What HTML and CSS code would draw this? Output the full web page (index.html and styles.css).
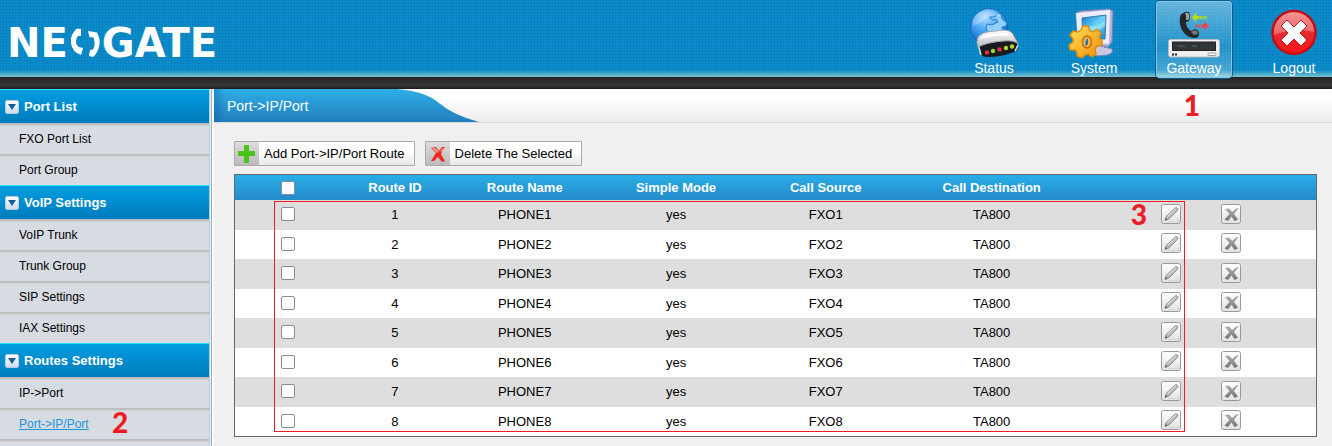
FILE: index.html
```html
<!DOCTYPE html>
<html lang="en">
<head>
<meta charset="utf-8">
<title>NeoGate</title>
<link rel="stylesheet" href="styles.css">
</head>
<body>
<svg class="defs" aria-hidden="true">
  <defs>
    <linearGradient id="pane" x1="0" y1="0" x2="0" y2="1"><stop offset="0" stop-color="#fff"/><stop offset="1" stop-color="#e2e2e2"/></linearGradient>
    <linearGradient id="gray" x1="0" y1="0" x2="0" y2="1"><stop offset="0" stop-color="#b0b0b0"/><stop offset="1" stop-color="#747474"/></linearGradient>
    <symbol id="edit" viewBox="0 0 20 20">
      <rect x=".5" y=".5" width="19" height="19" rx="2" fill="url(#pane)" stroke="#999"/>
      <path d="M7 17h9l2-3v4H7z" fill="#d4d4d4"/>
      <path d="M4 16.500l1-4L14 4q1-1 2.300 0t.4 2.300L8 15z" fill="#b9b9b4" stroke="#8a8a86" stroke-width=".8"/>
      <path d="M6.500 12.500L15 4.700" stroke="#e9e9e4"/>
      <path d="M4 16.500l.8-2.500 1.700 1.500z" fill="#555"/>
    </symbol>
    <symbol id="remove" viewBox="0 0 20 20">
      <rect x=".5" y=".5" width="19" height="19" rx="2" fill="url(#pane)" stroke="#999"/>
      <path d="M4 5l4-.5 3.200 3.500L15 4.500l3-.5q-3 3-5 6l4 5.500-3.500 1.500-3-4.500L7 17l-3.500-1.500 5-5.500z" fill="url(#gray)"/>
    </symbol>
  </defs>
</svg>

<header class="top">
  <div class="logo"><span>NE</span><svg class="logo-phones" viewBox="0 0 32 32" aria-hidden="true">
      <path d="M8 1.500Q1 7 2 16t10 12l2-7-4-1Q7 18 7 14q0-3 2-5l3 0V2z" fill="#fff"/>
      <path d="M19 4l9 1.500Q32 13 30 20t-6 10l-4-1 1-6 3-.5q3-5 .5-12l-4-.5z" fill="#fff"/>
    </svg><span>GATE</span></div>
  <nav class="nav">
    <a class="nav-item" href="#status">
      <svg class="nav-icon" viewBox="0 0 52 50" aria-hidden="true">
        <defs>
          <radialGradient id="globe" cx=".4" cy=".25" r=".8"><stop offset="0" stop-color="#a9ddff"/><stop offset=".5" stop-color="#3c9df0"/><stop offset="1" stop-color="#0c55b4"/></radialGradient>
          <linearGradient id="cap" x1="0" y1="0" x2="0" y2="1"><stop offset="0" stop-color="#fff"/><stop offset="1" stop-color="#b9bcc2"/></linearGradient>
        </defs>
        <circle cx="21" cy="19" r="18.500" fill="url(#globe)" stroke="#1a66b8"/>
        <path d="M22 9l5 0 3-4 3 1 1 5 5 4-1 3-4 1 1 4-5 3-4-2-6 0-2-4 1-4 5 1 6-3-2-3-4 1z" fill="#8fd0fc" stroke="#2881cf"/>
        <path d="M5 12Q9 3 20 3t13 6Q21 5 14 14L5 18z" fill="#fff" opacity=".25"/>
        <path d="M10 33l36-7 4 13q0 4-7 6-10 4-24 4-5 0-6-3z" fill="#171b20"/>
        <path d="M10 36l3 11M50 37l-3 6" stroke="#ddd" stroke-width="1.500"/>
        <path d="M9 34q0-8 10-10l17-2q6 0 9 4l5 10q-4-4-14-3-16 1-26 6z" fill="url(#cap)" stroke="#a0a4aa"/>
        <path d="M12 31q2-4 10-5l14-1q4 0 6 3-12-2-30 3z" fill="#fff"/>
        <circle cx="19" cy="44.500" r="2.200" fill="#e23232"/><circle cx="25" cy="43" r="2.200" fill="#9bd62c"/><circle cx="31.500" cy="41.500" r="2.200" fill="#e23232"/><circle cx="38" cy="40" r="2.200" fill="#b3d62c"/><circle cx="44" cy="38.500" r="2.200" fill="#b3d62c"/>
      </svg>
      <span>Status</span>
    </a>
    <a class="nav-item" href="#system">
      <svg class="nav-icon" viewBox="0 0 52 50" aria-hidden="true">
        <defs>
          <linearGradient id="screen" x1="0" y1="0" x2="1" y2="1"><stop offset="0" stop-color="#0c77cb"/><stop offset=".5" stop-color="#68d3fa"/><stop offset="1" stop-color="#1283d4"/></linearGradient>
          <linearGradient id="gear" x1="0" y1="0" x2="1" y2="1"><stop offset="0" stop-color="#ffe35a"/><stop offset="1" stop-color="#f08c08"/></linearGradient>
        </defs>
        <path d="M20 38l16-3v4l8 2q2 4-5 6-10 2-19-1z" fill="#c9c9e4" stroke="#8587b5"/>
        <path d="M8 5l5-2 28-2 4 2-1 31-4 5-30-4z" fill="#b2b2da" stroke="#8082b4"/>
        <path d="M8 5l34-3-1 34-31-2z" fill="#ececfa"/>
        <path d="M14 10l24-3-1 24-22-1z" fill="url(#screen)" stroke="#347ab4"/>
        <path d="M15 18q12 3 22-6v6q-9 8-22 6z" fill="#9ce8ff" opacity=".7"/>
        <path d="M15 18l5 0 2 5 3 1 4-3 4 4-2 5 3 2 0 5-5 1-2 3 1 5-4 3-4-3-3 1-3 3-5-2 0-4-2-2-5 0-1-5 4-3 0-3-3-4 3-4 5 1 3-2z" fill="url(#gear)" stroke="#e08c08" stroke-width="1.500" stroke-linejoin="round"/>
        <ellipse cx="19" cy="34" rx="4.500" ry="6" fill="#f2b24b" stroke="#c86d06" stroke-width="1.500"/>
        <path d="M18 38q-2-5 2-8v6z" fill="#2374b8"/>
      </svg>
      <span>System</span>
    </a>
    <a class="nav-item active" href="#gateway" aria-current="page">
      <svg class="nav-icon" viewBox="0 0 52 50" aria-hidden="true">
        <path d="M14 6q3-3 7-2 2 4 0 9l-3 1q0 6 5 9l4-2q4 1 4 5 0 4-5 4-8-1-12-8-4-9-1-16z" fill="#25282b"/>
        <path d="M17 5q3-1 4 1 1 4-1 6l-2 0q1-4-1-7z" fill="#9ba1a5"/><path d="M23 24l4-2q3 1 3 4l-4 1z" fill="#777"/>
        <path d="M23.500 9.500l5-4.500v3h3v3h-3v3z" fill="#b7dc12"/><path d="M33 8v3M35.500 8v3M38 8v3" stroke="#b7dc12" stroke-width="1.500"/>
        <path d="M41 18l-5-4.500v3h-3v3h3v3z" fill="#ef4451"/><path d="M31 16.500v3M28.500 16.500v3" stroke="#ef4451" stroke-width="1.500"/>
        <rect x=".5" y="31.500" width="51" height="17.500" rx="2" fill="#efefef" stroke="#bbb"/>
        <rect x="4.500" y="34" width="43" height="8.500" fill="#30353a" stroke="#222"/>
        <path d="M9 38h8M24 38h5" stroke="#454b50" stroke-width="2"/>
        <path d="M4 46.500h2M7 46.500h2" stroke="#222" stroke-width="2"/><rect x="40" y="45" width="8" height="2.500" rx="1" fill="#fff" stroke="#999"/>
      </svg>
      <span>Gateway</span>
    </a>
    <a class="nav-item" href="#logout">
      <svg class="nav-icon" viewBox="0 0 52 50" aria-hidden="true">
        <defs><linearGradient id="stop" x1="0" y1="0" x2="0" y2="1"><stop offset="0" stop-color="#f27070"/><stop offset=".5" stop-color="#e52c30"/><stop offset="1" stop-color="#ff1212"/></linearGradient></defs>
        <circle cx="26" cy="24.500" r="21.500" fill="url(#stop)" stroke="#c40d14" stroke-width="2.500"/>
        <path d="M6 24a20 20 0 0 1 40 0q-18-5-40 3z" fill="#fff" opacity=".28"/>
        <path d="M19 12l7 7 7-7 6 6-7 7 7 7-6 6-7-7-7 7-6-6 7-7-7-7z" fill="#fff" stroke="#bd1a1f"/>
      </svg>
      <span>Logout</span>
    </a>
  </nav>
</header>

<div class="layout">
  <aside class="side">
    <h2 class="group"><span class="fold"></span>Port List</h2>
    <ul class="links"><li><a href="#fxo">FXO Port List</a></li><li><a href="#group">Port Group</a></li></ul>
    <h2 class="group"><span class="fold"></span>VoIP Settings</h2>
    <ul class="links"><li><a href="#voip">VoIP Trunk</a></li><li><a href="#trunk">Trunk Group</a></li><li><a href="#sip">SIP Settings</a></li><li><a href="#iax">IAX Settings</a></li></ul>
    <h2 class="group"><span class="fold"></span>Routes Settings</h2>
    <ul class="links"><li><a href="#ip-port">IP-&gt;Port</a></li><li><a class="current" href="#port-ip">Port-&gt;IP/Port</a><b class="mark mark-link">2</b></li></ul>
    <div class="rest"></div>
  </aside>

  <main class="main">
    <div class="tabs">
      <h1 class="tab">Port-&gt;IP/Port</h1>
      <svg class="tab-end" viewBox="0 0 90 33" preserveAspectRatio="none" aria-hidden="true">
        <defs><linearGradient id="tabfill" x1="0" y1="0" x2="0" y2="1"><stop offset="0" stop-color="#2eaee6"/><stop offset="1" stop-color="#227fbd"/></linearGradient></defs>
        <path d="M0 0H8Q36 2 50 14T90 33H0z" fill="url(#tabfill)"/>
      </svg>
      <b class="mark mark-tab">1</b>
    </div>
    <div class="content">
      <div class="actions">
        <button class="action" type="button"><span class="action-icon"><svg viewBox="0 0 24 23" aria-hidden="true"><path d="M9 3h5v6h6v5h-6v7H9v-7H3V9h6z" fill="#4cc31c"/></svg></span><span class="action-text">Add Port-&gt;IP/Port Route</span></button>
        <button class="action" type="button"><span class="action-icon"><svg viewBox="0 0 24 23" aria-hidden="true"><path d="M5 6l5-1 3 4 3-4h3q-3 4-4 7 2 4 4 7l-3 1-4-5-4 4H5l5-8z" fill="#ed2a20"/><path d="M6 6l4 0 3 4-3 1zM14 9l3-3h2l-3 4z" fill="#f78e84"/></svg></span><span class="action-text">Delete The Selected</span></button>
      </div>
      <div class="grid">
        <table class="routes">
          <colgroup><col class="c-check"><col class="c-id"><col class="c-name"><col class="c-mode"><col class="c-source"><col class="c-dest"><col class="c-edit"><col></colgroup>
          <thead><tr><th><input class="check" type="checkbox" aria-label="Select all routes"></th><th>Route ID</th><th>Route Name</th><th>Simple Mode</th><th>Call Source</th><th>Call Destination</th><th></th><th></th></tr></thead>
          <tbody>
            <tr><td><input class="check" type="checkbox" aria-label="Select route 1"></td><td>1</td><td>PHONE1</td><td>yes</td><td>FXO1</td><td>TA800</td><td class="edit"><button class="tool" type="button" aria-label="Edit route 1"><svg><use href="#edit"/></svg></button></td><td class="remove"><button class="tool" type="button" aria-label="Delete route 1"><svg><use href="#remove"/></svg></button></td></tr>
            <tr><td><input class="check" type="checkbox" aria-label="Select route 2"></td><td>2</td><td>PHONE2</td><td>yes</td><td>FXO2</td><td>TA800</td><td class="edit"><button class="tool" type="button" aria-label="Edit route 2"><svg><use href="#edit"/></svg></button></td><td class="remove"><button class="tool" type="button" aria-label="Delete route 2"><svg><use href="#remove"/></svg></button></td></tr>
            <tr><td><input class="check" type="checkbox" aria-label="Select route 3"></td><td>3</td><td>PHONE3</td><td>yes</td><td>FXO3</td><td>TA800</td><td class="edit"><button class="tool" type="button" aria-label="Edit route 3"><svg><use href="#edit"/></svg></button></td><td class="remove"><button class="tool" type="button" aria-label="Delete route 3"><svg><use href="#remove"/></svg></button></td></tr>
            <tr><td><input class="check" type="checkbox" aria-label="Select route 4"></td><td>4</td><td>PHONE4</td><td>yes</td><td>FXO4</td><td>TA800</td><td class="edit"><button class="tool" type="button" aria-label="Edit route 4"><svg><use href="#edit"/></svg></button></td><td class="remove"><button class="tool" type="button" aria-label="Delete route 4"><svg><use href="#remove"/></svg></button></td></tr>
            <tr><td><input class="check" type="checkbox" aria-label="Select route 5"></td><td>5</td><td>PHONE5</td><td>yes</td><td>FXO5</td><td>TA800</td><td class="edit"><button class="tool" type="button" aria-label="Edit route 5"><svg><use href="#edit"/></svg></button></td><td class="remove"><button class="tool" type="button" aria-label="Delete route 5"><svg><use href="#remove"/></svg></button></td></tr>
            <tr><td><input class="check" type="checkbox" aria-label="Select route 6"></td><td>6</td><td>PHONE6</td><td>yes</td><td>FXO6</td><td>TA800</td><td class="edit"><button class="tool" type="button" aria-label="Edit route 6"><svg><use href="#edit"/></svg></button></td><td class="remove"><button class="tool" type="button" aria-label="Delete route 6"><svg><use href="#remove"/></svg></button></td></tr>
            <tr><td><input class="check" type="checkbox" aria-label="Select route 7"></td><td>7</td><td>PHONE7</td><td>yes</td><td>FXO7</td><td>TA800</td><td class="edit"><button class="tool" type="button" aria-label="Edit route 7"><svg><use href="#edit"/></svg></button></td><td class="remove"><button class="tool" type="button" aria-label="Delete route 7"><svg><use href="#remove"/></svg></button></td></tr>
            <tr><td><input class="check" type="checkbox" aria-label="Select route 8"></td><td>8</td><td>PHONE8</td><td>yes</td><td>FXO8</td><td>TA800</td><td class="edit"><button class="tool" type="button" aria-label="Edit route 8"><svg><use href="#edit"/></svg></button></td><td class="remove"><button class="tool" type="button" aria-label="Delete route 8"><svg><use href="#remove"/></svg></button></td></tr>
          </tbody>
        </table>
        <div class="outline"></div>
        <b class="mark mark-grid">3</b>
      </div>
    </div>
  </main>
</div>
</body>
</html>
```

FILE: styles.css
```css
* { box-sizing: border-box; }

body {
  margin: 0;
  min-height: 100vh;
  display: flex;
  flex-direction: column;
  background: #f0f0f0;
  color: #000;
  font: 13px/16px "Liberation Sans", Arial, sans-serif;
}

a { color: inherit; text-decoration: none; }
.defs { position: absolute; width: 0; height: 0; }

/* Header */
.top {
  display: flex;
  justify-content: space-between;
  padding-bottom: 11px;
  background:
    linear-gradient(#222, #383838 8px, #1c1c1c) bottom / 100% 12px no-repeat,
    linear-gradient(to bottom, transparent 70px, #7cc3cf 77px),
    repeating-linear-gradient(to right, rgba(0, 50, 110, .09) 0 1px, transparent 1px 3px),
    repeating-linear-gradient(to bottom, rgba(0, 50, 110, .08) 0 1px, transparent 1px 3px),
    #0b8dcb;
}
.logo {
  display: flex;
  align-items: center;
  gap: 1px;
  padding: 8px 0 0 7px;
  color: #fff;
  font: bold 40px/40px "DejaVu Sans", sans-serif;
}
.logo-phones { width: 32px; height: 32px; }

.nav { display: flex; gap: 24px; padding-top: 1px; }
.nav-item {
  display: flex;
  flex-direction: column;
  align-items: center;
  width: 76px;
  height: 77px;
  padding-top: 7px;
  color: #fff;
  font-size: 14px;
  line-height: 20px;
}
.nav-item.active {
  border-radius: 4px;
  background: linear-gradient(rgba(255, 255, 255, .38), rgba(255, 255, 255, .1) 60%, rgba(255, 255, 255, .3));
  box-shadow: inset 0 0 0 1px #84c5e2, 0 0 0 1px #075e8d;
}
.nav-icon { width: 52px; height: 50px; }

/* Sidebar */
.layout { flex: 1; display: flex; }
.side {
  display: flex;
  flex-direction: column;
  flex: 0 0 210px;
  border-right: 1px solid #9fd6ee;
}
.group {
  display: flex;
  align-items: center;
  gap: 5px;
  height: 34px;
  margin: 0;
  padding-left: 5px;
  border-top: 1px solid #2ee2f5;
  background: linear-gradient(#009de0, #007bbd);
  color: #fff;
  font-size: 13px;
}
.fold {
  display: flex;
  align-items: center;
  justify-content: center;
  width: 14px;
  height: 14px;
  border: 1px solid #b7cbe8;
  border-radius: 2px;
  background: linear-gradient(#fff, #cddaf0);
}
.fold::before {
  content: "";
  border: 4px solid transparent;
  border-top: 6px solid #1b5c94;
  border-bottom: 0;
}
.links { margin: 0; padding: 0; list-style: none; font-size: 12px; }
.links li {
  position: relative;
  height: 31px;
  padding: 8px 0 0 19px;
}
.links li, .rest { background: linear-gradient(#b8b8b8, #c4c5c8 2px, #d7dbe2 3px); }
.rest { flex: 1; }
.current { color: #2196d8; text-decoration: underline; }

/* Content */
.main {
  flex: 1;
  min-width: 0;
  margin-left: 1px;
  border-left: 1px solid #aaa;
  box-shadow: inset 2px 0 #fafafa;
  padding-left: 2px;
}
.tabs {
  position: relative;
  display: flex;
  height: 34px;
  border-bottom: 1px solid #d8d8d8;
  background: linear-gradient(#fff 30%, #ececec);
}
.tab {
  width: 175px;
  margin: 0;
  padding: 0 13px;
  background: linear-gradient(to right, rgba(0, 70, 140, .3), transparent 12px), linear-gradient(#2eaee6, #227fbd);
  color: #fff;
  font-size: 14px;
  font-weight: normal;
  line-height: 34px;
}
.tab-end { width: 90px; height: 33px; }
.content { padding: 18px 15px 9px 20px; }

.actions { display: flex; gap: 10px; margin-bottom: 8px; }
.action {
  display: flex;
  height: 25px;
  padding: 0;
  border: 1px solid #aaa;
  border-radius: 1px;
  background: linear-gradient(#fff 40%, #e8e8e8);
  color: #000;
  font: 13px/24px "Liberation Sans", Arial, sans-serif;
}
.action-icon { width: 24px; height: 23px; background: linear-gradient(#dcdcdc, #bcbcbc); }
.action-icon svg { display: block; width: 24px; height: 23px; }
.action-text { padding: 0 9px 0 5px; }

.grid { position: relative; border: 1px solid #666; }
.routes {
  width: 100%;
  table-layout: fixed;
  border-collapse: collapse;
  text-align: center;
}
.c-check { width: 9.8%; }
.c-id { width: 10%; }
.c-name, .c-mode { width: 14%; }
.c-source { width: 13.7%; }
.c-dest { width: 17%; }
.c-edit { width: 10.8%; }
.routes th, .routes td { padding: 0; }
.routes th { height: 25px; background: linear-gradient(#2aaee8, #238bc9); color: #fff; }
.routes td { height: 29px; background: #fff; }
.routes tbody tr:nth-child(odd) td { height: 30px; background: #dedede; }
.routes td:first-child { padding-bottom: 2px; }
.routes .edit { padding: 0 19px 3px 0; text-align: right; }
.routes .remove { padding: 0 0 3px 21px; text-align: left; }

.check {
  appearance: none;
  display: block;
  width: 14px;
  height: 14px;
  margin: 0 auto;
  border: 1px solid #8a8a99;
  border-radius: 2px;
  background: #fff;
}
.check:checked { background: #2196d8; }
.tool {
  display: block;
  width: 20px;
  height: 20px;
  padding: 0;
  border: 0;
  background: none;
}
.edit .tool { margin-left: auto; }
.tool svg { display: block; width: 20px; height: 20px; }

/* Step markers */
.outline {
  position: absolute;
  inset: 26px 131px 4px 39px;
  border: 1px solid #ed1c24;
  pointer-events: none;
}
.mark {
  position: absolute;
  color: #ed1c24;
  font: 900 28px/28px Lato, sans-serif;
}
.mark-tab { top: 2px; right: 132px; }
.mark-link { top: 0; left: 112px; }
.mark-grid { top: 25px; right: 169px; }
```
